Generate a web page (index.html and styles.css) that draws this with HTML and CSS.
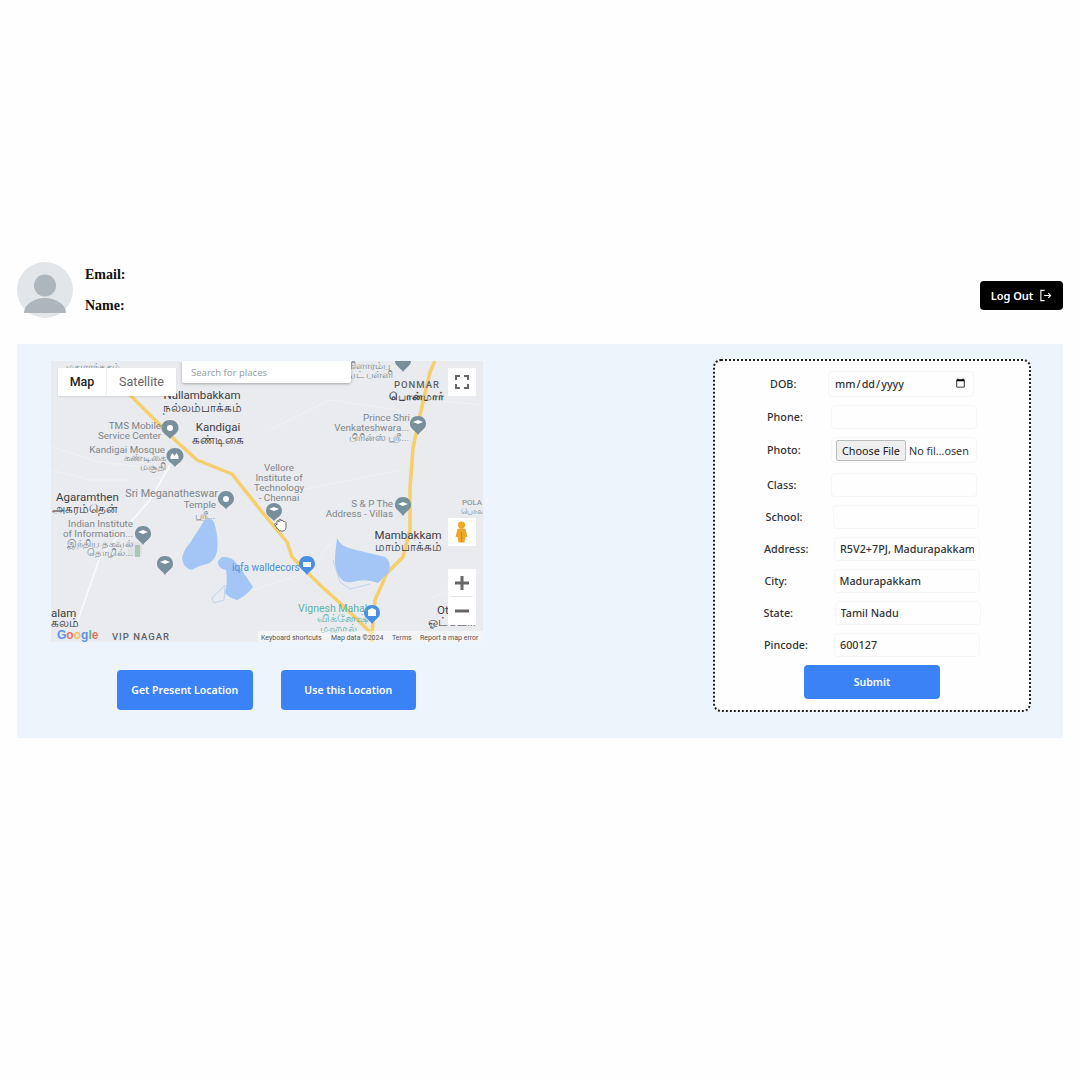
FILE: index.html
```html
<!DOCTYPE html>
<html lang="en">
<head>
  <meta charset="UTF-8">
  <title>Profile</title>
  <link rel="stylesheet" href="styles.css">
</head>
<body>
  <div class="page">
    <header class="top">
      <svg class="avatar" viewBox="0 0 56 56">
        <circle cx="28" cy="28" r="28" fill="#e3e6e9"/>
        <g fill="#aeb5bb">
          <circle cx="28" cy="23.500" r="11"/>
          <path d="M7 51a21 15 0 0 1 42 0Z"/>
        </g>
      </svg>
      <div class="info">
        <p>Email:</p>
        <p>Name:</p>
      </div>
      <button class="logout">Log Out
        <svg viewBox="0 0 14 14" width="13" height="13" fill="none" stroke="#fff" stroke-width="1.2">
          <path d="M6 1.500H2v11h4M5.500 7h7M10 4.500 12.500 7 10 9.500"/>
        </svg>
      </button>
    </header>

    <section class="panel">
      <div class="left">
        <div class="map">
          <svg class="map-svg" viewBox="51 361 432 281">
            <rect x="51" y="361" width="432" height="281" fill="#e9ebee"/>
            <!-- small roads -->
            <g fill="none" stroke="#f1f2f4" stroke-width=".8">
              <path d="M170 465 150 500 100 557 77 623" stroke="#f8f9fa" stroke-width="1.800"/>
              <path d="M51 447 100 462 170 470M220 600 300 575 335 540M51 470 90 480 130 480"/>
              <path d="M400 410 330 400 270 430M430 400 483 405M300 490 400 470M430 600 483 570"/>
            </g>
            <rect x="128" y="542" width="14" height="14" fill="#dfe2e5"/>
            <rect x="135" y="545" width="5" height="12" fill="#a9c9b4"/>
            <!-- main roads -->
            <g fill="none" stroke="#f5cf6b" stroke-width="3.500" stroke-linejoin="round">
              <path d="M128 393 175 440 197 460 232 474 262 512 287 542 292 557 300 565 320 585 340 603 360 622 372 634V642"/>
              <path d="M435 361 430 372 420 415 413 448 410 488V530L403 557 387 573 375 600 372 634"/>
            </g>
            <!-- lakes -->
            <g fill="#a4c6f6">
              <path d="M204 521Q210 516 214 522 219 538 217 552 214 562 207 564 197 566 192 570 183 568 182 558 184 549 190 543Z"/>
              <path d="M222 557Q232 556 237 564 246 576 253 587 246 596 237 600 229 598 225 593 228 580 226 570 217 568 218 561Z"/>
              <path d="M337 538Q340 546 352 549L385 557Q392 562 389 572L378 583Q366 578 352 582 345 583 342 580 334 572 335 556Z"/>
            </g>
            <path d="M212 598 225 585 224 600 214 603ZM333 560 340 582 350 589 370 584" fill="none" stroke="#b5cdf0" stroke-width=".8"/>

            <!-- pins -->
            <g fill="#78909c">
              <path d="M170 420c-5 0-8.500 3.500-8.500 8 0 5 5.500 7 8.500 11 3-4 8.500-6 8.500-11 0-4.500-3.500-8-8.500-8Z"/>
              <path d="M175 448c-5 0-8.500 3.500-8.500 8 0 5 5.500 7 8.500 11 3-4 8.500-6 8.500-11 0-4.500-3.500-8-8.500-8Z"/>
              <path d="M226 491c-4.500 0-8 3.500-8 8 0 5 5 6 8 10 3-4 8-5 8-10 0-4.500-3.500-8-8-8Z"/>
              <path d="M274 503c-4.500 0-8 3.500-8 8 0 5 5 6 8 10 3-4 8-5 8-10 0-4.500-3.500-8-8-8Z"/>
              <path d="M143 526c-5 0-8 3.500-8 8 0 5 5 6 8 11 3-5 8-6 8-11 0-4.500-3-8-8-8Z"/>
              <path d="M165 556c-5 0-8 3.500-8 8 0 5 5 6 8 11 3-5 8-6 8-11 0-4.500-3-8-8-8Z"/>
              <path d="M418 416c-5 0-8 3.500-8 8 0 5 5 6 8 11 3-5 8-6 8-11 0-4.500-3-8-8-8Z"/>
              <path d="M403 497c-5 0-8 3.500-8 8 0 5 5 6 8 11 3-5 8-6 8-11 0-4.500-3-8-8-8Z"/>
              <path d="M395 361h16c0 5-5 6-8 11-3-5-8-6-8-11Z"/>
            </g>
            <g fill="#4a90e2">
              <path d="M307 556c-5 0-8 3.500-8 8 0 5 5 6 8 11 3-5 8-6 8-11 0-4.500-3-8-8-8Z"/>
              <path d="M372 605c-5 0-8 3.500-8 8 0 5 5 6 8 11 3-5 8-6 8-11 0-4.500-3-8-8-8Z"/>
            </g>
            <g fill="#fff">
              <circle cx="170" cy="428" r="3"/>
              <path d="M170.500 459v-3l2-3 2 3 2-3 2 3v3ZM138 532l5-2 5 2-5 2ZM160 562l5-2 5 2-5 2ZM413 422l5-2 5 2-5 2ZM398 504l5-2 5 2-5 2ZM269 509l5-2 5 2-5 2ZM303 562h8v5h-8ZM368 610l4-2 4 2v6h-8Z"/>
              <circle cx="226" cy="499" r="3"/>
            </g>

            <!-- place names -->
            <g class="lbl-dark">
              <text x="202" y="399" text-anchor="middle">Nallambakkam</text>
              <text x="202" y="412" text-anchor="middle">நல்லம்பாக்கம்</text>
              <text x="218" y="431" text-anchor="middle">Kandigai</text>
              <text x="218" y="444" text-anchor="middle">கண்டிகை</text>
              <text x="56" y="501">Agaramthen</text>
              <text x="52" y="513">அகரம்தென்</text>
              <text x="408" y="539" text-anchor="middle">Mambakkam</text>
              <text x="408" y="551" text-anchor="middle">மாம்பாக்கம்</text>
              <text x="437" y="614">Ot</text>
              <text x="470" y="614">a</text>
              <text x="428" y="626">ஓட்டேரி</text>
              <text x="51" y="617">alam</text>
              <text x="51" y="627">கலம்</text>
            </g>
            <g class="lbl-dark lbl-area">
              <text x="417" y="388" text-anchor="middle">PONMAR</text>
              <text x="141" y="640" text-anchor="middle">VIP NAGAR</text>
            </g>
            <text class="lbl-dark lbl-bold" x="416" y="400" text-anchor="middle">பொன்மார்</text>
            <g class="lbl-grey">
              <text x="161" y="429" text-anchor="end">TMS Mobile</text>
              <text x="161" y="439" text-anchor="end">Service Center</text>
              <text x="165" y="453" text-anchor="end">Kandigai Mosque</text>
              <text x="145" y="461" text-anchor="middle">கண்டிகை</text>
              <text x="153" y="470" text-anchor="middle">மசூதி</text>
              <text class="lbl-wide" x="218" y="497" text-anchor="end">Sri Meganatheswar</text>
              <text x="216" y="508" text-anchor="end">Temple</text>
              <text x="205" y="519" text-anchor="middle">ஸ்ரீ...</text>
              <text x="279" y="471" text-anchor="middle">Vellore</text>
              <text x="279" y="481" text-anchor="middle">Institute of</text>
              <text x="279" y="491" text-anchor="middle">Technology</text>
              <text x="279" y="501" text-anchor="middle">- Chennai</text>
              <text x="410" y="421" text-anchor="end">Prince Shri</text>
              <text x="409" y="431" text-anchor="end">Venkateshwara...</text>
              <text x="409" y="441" text-anchor="end">பிரின்ஸ் ஸ்ரீ...</text>
              <text x="393" y="507" text-anchor="end">S &amp; P The</text>
              <text x="393" y="517" text-anchor="end">Address - Villas</text>
              <text x="133" y="527" text-anchor="end">Indian Institute</text>
              <text x="133" y="537" text-anchor="end">of Information...</text>
              <text x="133" y="547" text-anchor="end">இந்திய தகவல்</text>
              <text x="133" y="556" text-anchor="end">தொழில்...</text>
              <text x="390" y="369" text-anchor="end">கிளாரம்பு</text>
              <text x="393" y="378" text-anchor="end">வட் பள்ளி</text>
              <text x="120" y="370" text-anchor="end">மதுராந்தகம்</text>
              <text x="472" y="505" text-anchor="middle" class="lbl-tiny">POLA</text>
              <text x="472" y="514" text-anchor="middle" class="lbl-tiny">பொல</text>
            </g>
            <text class="lbl-blue" x="232" y="571">iqfa walldecors</text>
            <g class="lbl-teal">
              <text x="298" y="612">Vignesh Mahal</text>
              <text x="342" y="622" text-anchor="middle">விக்னேஷ்</text>
              <text x="338" y="632" text-anchor="middle">மஹால்</text>
            </g>
            <!-- google logo -->
            <text class="google" x="57" y="639"><tspan fill="#5a95e8">G</tspan><tspan fill="#e57368">o</tspan><tspan fill="#ecc25a">o</tspan><tspan fill="#5a95e8">g</tspan><tspan fill="#62b57c">l</tspan><tspan fill="#e57368">e</tspan></text>
            <!-- footer -->
            <rect x="258" y="631" width="225" height="11" fill="#fff" opacity=".45"/>
            <g class="map-foot">
              <text x="261" y="640">Keyboard shortcuts</text>
              <text x="331" y="640">Map data ©2024</text>
              <text x="392" y="640">Terms</text>
              <text x="420" y="640">Report a map error</text>
            </g>
            <!-- hand cursor -->
            <path d="M277 521c1-1 2 0 2 1v-2c0-1 2-1 2 0v1c0-1 2-1 2 0l1 1c1-1 2 0 2 1v4c0 2-1 4-3 4h-2c-2 0-3-2-4-3l-2-3c-1-1 0-2 1-1l1 1Z" fill="#fff" stroke="#333" stroke-width=".7"/>
          </svg>

          <div class="map-type">
            <span class="on">Map</span>
            <span>Satellite</span>
          </div>
          <div class="map-search">Search for places</div>
          <div class="map-btn map-full">
            <svg viewBox="0 0 28 28" width="28" height="28" fill="none" stroke="#666" stroke-width="2">
              <path d="M8 12V8h4M16 8h4v4M20 16v4h-4M12 20H8v-4"/>
            </svg>
          </div>
          <div class="map-btn map-peg">
            <svg viewBox="0 0 28 28" width="28" height="28">
              <circle cx="13.500" cy="7" r="3.600" fill="#f0a92e"/>
              <path d="M9.500 11Q13.500 9.500 17.500 11L19.500 19H17.500L16.500 24.500H10.500L9.500 19H7.500Z" fill="#eda52a"/>
              <path d="M13.500 14V24" stroke="#c9851a" stroke-width=".8"/>
            </svg>
          </div>
          <div class="map-zoom">
            <div class="zoom-btn">
              <svg viewBox="0 0 28 28" width="28" height="28" fill="none" stroke="#666" stroke-width="3"><path d="M14 7v14M7 14h14"/></svg>
            </div>
            <div class="zoom-line"></div>
            <div class="zoom-btn">
              <svg viewBox="0 0 28 28" width="28" height="28" fill="none" stroke="#666" stroke-width="3"><path d="M7 14h14"/></svg>
            </div>
          </div>
        </div>

        <div class="map-actions">
          <button class="blue-btn">Get Present Location</button>
          <button class="blue-btn">Use this Location</button>
        </div>
      </div>

      <form class="form">
        <div class="field w-dob"><label>DOB:</label><input type="date"></div>
        <div class="field w-phone"><label>Phone:</label><input type="text"></div>
        <div class="field w-photo"><label>Photo:</label><input type="file"></div>
        <div class="field w-class"><label>Class:</label><input type="text"></div>
        <div class="field w-school"><label>School:</label><input type="text"></div>
        <div class="field w-address"><label>Address:</label><input type="text" value="R5V2+7PJ, Madurapakkam, Tamil Nadu"></div>
        <div class="field w-city"><label>City:</label><input type="text" value="Madurapakkam"></div>
        <div class="field w-state"><label>State:</label><input type="text" value="Tamil Nadu"></div>
        <div class="field w-pin"><label>Pincode:</label><input type="text" value="600127"></div>
        <button type="submit" class="blue-btn submit">Submit</button>
      </form>
    </section>
  </div>
</body>
</html>
```

FILE: styles.css
```css
* { box-sizing: border-box; }
body { margin: 0; background: #fefefe; font-family: "Noto Sans", "Open Sans", sans-serif; color: #222; }
.page { padding: 262px 17px 0; }

.top { display: flex; height: 56px; }
.avatar { width: 56px; height: 56px; flex: none; }
.info { margin-left: 12px; font-family: "Liberation Serif", serif; font-weight: bold; font-size: 14px; color: #111; }
.info p { margin: 5px 0 15px; line-height: 16px; }
.logout { margin: 19px 0 0 auto; width: 83px; height: 29px; background: #000; color: #fff; border: 0; border-radius: 4px; font: 600 11px "Noto Sans", sans-serif; display: flex; align-items: center; justify-content: center; gap: 6px; }

.panel { margin-top: 26px; height: 394px; background: #edf4fc; padding: 15px 32px 0 34px; display: flex; justify-content: space-between; align-items: flex-start; }
.left { margin-top: 2px; }

.map { position: relative; width: 432px; height: 281px; overflow: hidden; }
.map-svg { display: block; width: 432px; height: 281px; font-family: Roboto, "Noto Sans", sans-serif; }
.lbl-dark { font-size: 11.500px; fill: #3c4043; }
.lbl-area { font-size: 9.500px; letter-spacing: 1px; font-weight: 500; fill: #5f6368; }
.lbl-bold { font-size: 11px; font-weight: 700; }
.lbl-grey { font-size: 9.800px; fill: #80868b; }
.lbl-wide { font-size: 10.800px; }
.lbl-tiny { font-size: 8px; }
.lbl-blue { font-size: 10px; fill: #4a90d9; }
.lbl-teal { font-size: 10.500px; fill: #5fb3a8; }
.google { font-size: 12px; font-family: "Liberation Sans", sans-serif; font-weight: bold; }
.map-foot { font-size: 7px; fill: #555; }

.map-type { position: absolute; left: 7px; top: 7px; display: flex; width: 118px; height: 28px; padding-bottom: 1px; background: #fff; font: 12.500px Roboto, sans-serif; color: #666; box-shadow: 0 1px 2px rgba(0,0,0,.1); }
.map-type span { display: flex; align-items: center; justify-content: center; flex: 1 1 69px; }
.map-type .on { flex: 0 0 49px; color: #222; font-weight: 500; border-right: 1px solid #eee; }
.map-search { position: absolute; left: 131px; top: 0; width: 169px; height: 22px; background: #fff; padding-left: 9px; font: 9.500px/24px "Noto Sans", sans-serif; color: #9aa0a6; box-shadow: 0 1px 3px rgba(0,0,0,.3); border-radius: 0 0 2px 2px; }
.map-btn { position: absolute; left: 397px; width: 28px; height: 28px; background: #fff; }
.map-full { top: 7px; }
.map-peg { top: 157px; }
.map-zoom { position: absolute; left: 397px; top: 208px; width: 28px; height: 56px; background: #fff; }
.zoom-btn { height: 28px; }
.zoom-btn svg { display: block; }
.zoom-line { height: 1px; margin: -1px 3px 0; background: #e6e6e6; }

.map-actions { display: flex; gap: 28px; margin: 28px 0 0 66px; }
.blue-btn { width: 135.500px; height: 40px; background: #3b82f6; color: #fff; border: 0; border-radius: 4px; font: 600 10.500px "Noto Sans", sans-serif; padding: 0; }

.form { width: 318px; height: 353px; background: #fefefe; border: 2px dotted #222; border-radius: 8px; padding: 10px 0 0; display: flex; flex-direction: column; align-items: center; gap: 8px; }
.field { display: flex; justify-content: space-between; align-items: center; height: 24px; font-size: 10.800px; font-weight: 500; color: #333; }
.field label { margin-top: -2px; }
.field input { width: 146px; height: 24px; border: 1px solid #f6f6f6; border-radius: 4px; background: #fefefe; padding: 0 5px 2px; font: 500 10.800px "Noto Sans", sans-serif; color: #333; outline: none; }
.field input[type=date] { height: 26px; }
.field input[type=file] { height: 26px; padding: 2px 4px; font-weight: 400; }
.field input::file-selector-button { width: 70px; height: 21px; padding: 0; margin-right: 3px; font: 400 10.800px "Noto Sans", sans-serif; color: #222; background: #efefef; border: 1px solid #bbb; border-radius: 2px; }
.w-dob { width: 204px; height: 26px; }
.w-phone { width: 210px; }
.w-photo { width: 210px; height: 26px; margin-bottom: 2px; }
.w-class { width: 210px; }
.w-school { width: 213px; }
.w-address { width: 216px; }
.w-city { width: 215px; }
.w-state { width: 217px; }
.w-pin { width: 216px; }
.submit { width: 136px; height: 34px; flex: none; }
```
